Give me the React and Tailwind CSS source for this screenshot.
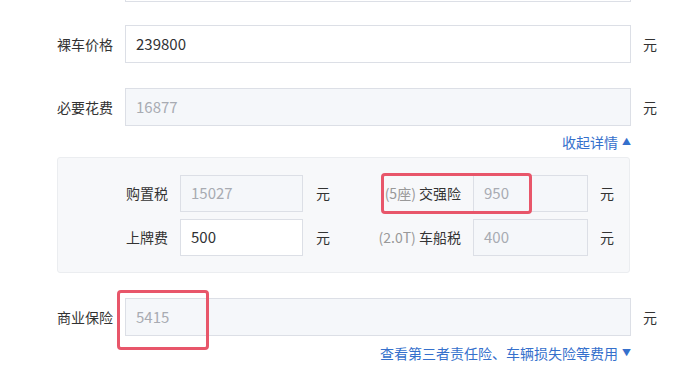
import React from "react";

const font = { fontFamily: '"Noto Sans CJK SC", "Noto Sans", sans-serif' };

const Field = ({ value, gray, className = "" }) => (
  <div
    className={`flex items-center box-border border border-[#dcdfe6] pl-[10px] text-[15px] ${
      gray ? "bg-[#f5f7fa] text-[#a8abb2]" : "bg-white text-[#303133]"
    } ${className}`}
  >
    {value}
  </div>
);

const Row = ({ label, value, gray, unit = true, className = "" }) => (
  <div className={`flex items-center h-[38px] ${className}`}>
    <div className="w-[113px] text-right text-[14px] text-[#333]">{label}</div>
    <Field value={value} gray={gray} className="ml-[12px] w-[506px] h-[38px]" />
    {unit && <span className="ml-[12px] text-[14px] text-[#333]">元</span>}
  </div>
);

const App = () => {
  return (
    <div
      className="relative w-[677px] h-[383px] overflow-hidden bg-white flex flex-col"
      style={font}
    >
      {/* previous field, cut off at the top */}
      <Row label="" value="" unit={false} className="mt-[-36px]" />

      <Row label="裸车价格" value="239800" className="mt-[23px]" />
      <Row label="必要花费" value="16877" gray className="mt-[25px]" />

      <div className="mt-[6px] h-[20px] w-[631px] flex items-center justify-end text-[14px] text-[#3570cc]">
        收起详情<span className="ml-[4px] text-[9px]">▲</span>
      </div>

      {/* details panel */}
      <div className="mt-[5px] ml-[57px] w-[573px] h-[116px] box-border border border-[#ebedf0] rounded-[3px] bg-[#f7f8fa] pt-[17px] flex flex-col gap-[7px]">
        <div className="flex items-center h-[37px] text-[14px] text-[#333]">
          <div className="w-[110px] text-right">购置税</div>
          <Field value="15027" gray className="ml-[12px] w-[123px] h-[37px]" />
          <span className="ml-[13px]">元</span>
          <div className="w-[131px] text-right">
            <span className="text-[#999]">(5座)</span> 交强险
          </div>
          <Field value="950" gray className="ml-[12px] w-[115px] h-[37px]" />
          <span className="ml-[12px]">元</span>
        </div>
        <div className="flex items-center h-[37px] text-[14px] text-[#333]">
          <div className="w-[110px] text-right">上牌费</div>
          <Field value="500" className="ml-[12px] w-[123px] h-[37px]" />
          <span className="ml-[13px]">元</span>
          <div className="w-[131px] text-right">
            <span className="text-[#999]">(2.0T)</span> 车船税
          </div>
          <Field value="400" gray className="ml-[12px] w-[115px] h-[37px]" />
          <span className="ml-[12px]">元</span>
        </div>
      </div>

      <Row label="商业保险" value="5415" gray className="mt-[25px]" />

      <div className="mt-[7px] h-[20px] w-[631px] flex items-center justify-end text-[14px] text-[#3570cc]">
        查看第三者责任险、车辆损失险等费用<span className="ml-[4px] text-[9px]">▼</span>
      </div>

      {/* annotation boxes */}
      <div className="absolute left-[381px] top-[173px] w-[151px] h-[41px] border-[3px] border-[#e8566a] rounded-[4px]" />
      <div className="absolute left-[117px] top-[290px] w-[92px] h-[60px] border-[3px] border-[#e8566a] rounded-[4px]" />
    </div>
  );
};

export default App;
